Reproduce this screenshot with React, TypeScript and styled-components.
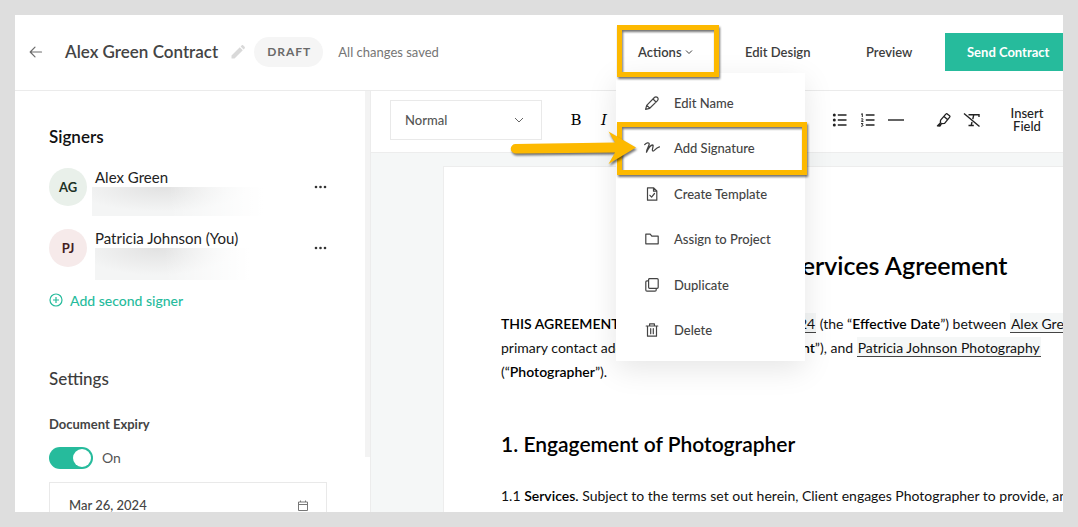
import React, { useState } from "react";
import styled, { createGlobalStyle, css } from "styled-components";

const GlobalStyle = createGlobalStyle`
  *, *::before, *::after { box-sizing: border-box; }
  body { margin: 0; background: #dedede; }
  body, button, input, select { font-family: Lato, "Open Sans", sans-serif; }
  button { border: 0; padding: 0; background: none; cursor: pointer; color: inherit; }
  h1, h2, p, ul { margin: 0; padding: 0; }
`;

const accent = "#26bb9c";
const marker = "#fdb900";

const Shell = styled.div`
  padding: 15px;
  height: 100vh;
`;

const Frame = styled.div`
  display: flex;
  flex-direction: column;
  height: 100%;
  overflow: hidden;
  background: #fff;
`;

const Header = styled.header`
  position: relative;
  z-index: 2;
  flex: none;
  display: flex;
  align-items: center;
  height: 76px;
  padding: 0 0 2px 13px;
  border-bottom: 1px solid #ebebeb;
  color: #3d3d3d;
`;

const BackButton = styled.button`
  display: flex;
  color: #6c6c6c;
  margin-right: 21px;
`;

const DocTitle = styled.span`
  font-size: 17px;
  font-weight: 600;
  white-space: nowrap;
  color: #444;
`;

const RenameButton = styled.button`
  display: flex;
  margin: 0 8px 0 12px;
`;

const Badge = styled.span`
  padding: 0 12px 0 13px;
  border-radius: 15px;
  background: #f5f5f5;
  color: #6a6a6a;
  font-size: 12px;
  font-weight: 700;
  line-height: 30px;
  letter-spacing: 1px;
`;

const SaveState = styled.span`
  margin-left: 15px;
  font-size: 13px;
  color: #757575;
  white-space: nowrap;
`;

const Nav = styled.nav`
  display: flex;
  align-items: center;
  margin-left: auto;
`;

const MenuAnchor = styled.div`
  position: relative;
  width: 102px;
  margin-right: 26px;
`;

const NavButton = styled.button<{ $width?: number }>`
  width: ${(p) => (p.$width ? `${p.$width}px` : "auto")};
  font-size: 13px;
  font-weight: 600;
  line-height: 38px;
  white-space: nowrap;
  text-align: left;
`;

const ActionsButton = styled(NavButton)`
  display: flex;
  align-items: center;
  gap: 3px;
  padding-left: 21px;
`;

const NavLinks = styled.div`
  display: flex;
  gap: 54px;
  margin-right: 32px;
`;

const SendButton = styled.button`
  height: 38px;
  width: 118px;
  padding-left: 22px;
  background: ${accent};
  color: #fff;
  font-size: 13px;
  font-weight: 700;
  text-align: left;
  white-space: nowrap;
`;

const outline = css`
  content: "";
  position: absolute;
  border: 5px solid ${marker};
  filter: drop-shadow(1px 2px 1px rgba(0, 0, 0, 0.55));
  pointer-events: none;
`;

const Callout = styled.span`
  ${outline}
  inset: -8px 0 -6px;
  z-index: 2;
`;

const Menu = styled.ul`
  position: absolute;
  top: 40px;
  left: -1px;
  display: flex;
  flex-direction: column;
  justify-content: space-between;
  width: 189px;
  height: 288px;
  padding: 8px 0;
  list-style: none;
  background: #fff;
  box-shadow: 0 8px 28px rgba(0, 0, 0, 0.1);
`;

const MenuEntry = styled.li<{ $marked?: boolean }>`
  position: relative;
  ${(p) =>
    p.$marked &&
    css`
      &::after {
        ${outline}
        inset: -4px -2px -4px 1px;
      }
    `}
`;

const MenuButton = styled.button`
  display: flex;
  align-items: center;
  gap: 14px;
  width: 100%;
  height: 45px;
  padding-left: 28px;
  color: #444;
  font-size: 13px;
  font-weight: 500;
  svg { flex: none; }
`;

const Pointer = styled.svg`
  position: absolute;
  z-index: 1;
  right: 169px;
  top: 5px;
  overflow: visible;
  filter: drop-shadow(1px 2px 1px rgba(0, 0, 0, 0.55));
`;

const Body = styled.div`
  flex: 1;
  min-height: 0;
  display: flex;
`;

const Sidebar = styled.aside`
  flex: none;
  display: flex;
  width: 356px;
  overflow: hidden;
  border-right: 1px solid #ececec;
`;

const SidebarContent = styled.div`
  flex: 1;
  padding: 34px 38px 0 34px;
`;

const ScrollThumb = styled.div`
  width: 5px;
  height: 87%;
  background: #f3f3f3;
`;

const SectionTitle = styled.h2<{ $soft?: boolean }>`
  font-size: 17px;
  line-height: 24px;
  font-weight: ${(p) => (p.$soft ? 500 : 600)};
  color: ${(p) => (p.$soft ? "#3d3d3d" : "#111")};
`;

const SignerList = styled.ul`
  margin-top: 19px;
  list-style: none;
`;

const Signer = styled.li`
  display: flex;
  gap: 8px;
  height: 61px;
`;

const Avatar = styled.span<{ $bg: string; $fg: string }>`
  flex: none;
  width: 38px;
  height: 38px;
  border-radius: 50%;
  background: ${(p) => p.$bg};
  color: ${(p) => p.$fg};
  font-size: 13px;
  font-weight: 700;
  line-height: 38px;
  text-align: center;
`;

const SignerInfo = styled.div`
  flex: 1;
  font-size: 15px;
  line-height: 19px;
  color: #222;
`;

const Redacted = styled.div<{ $wide?: boolean }>`
  height: ${(p) => (p.$wide ? 29 : 32)}px;
  width: ${(p) => (p.$wide ? 171 : 154)}px;
  margin-left: ${(p) => (p.$wide ? -3 : 0)}px;
  background:
    linear-gradient(to right, transparent 45%, #fff),
    radial-gradient(ellipse at 40% 0, #e2e2e2, #f4f5f5 60%);
`;

const MoreButton = styled.button`
  display: flex;
  align-items: center;
  height: 38px;
`;

const AddSigner = styled.button`
  display: flex;
  align-items: center;
  gap: 7px;
  height: 20px;
  color: ${accent};
  font-size: 14px;
  font-weight: 500;
`;

const Settings = styled.section`
  margin-top: 57px;
`;

const FieldTitle = styled.label`
  display: block;
  margin: 23px 0 13px;
  font-size: 13px;
  font-weight: 700;
  line-height: 20px;
  color: #444;
`;

const SwitchRow = styled.div`
  display: flex;
  align-items: center;
  gap: 9px;
  font-size: 14px;
  line-height: 22px;
  color: #555;
`;

const Switch = styled.input`
  appearance: none;
  width: 44px;
  height: 22px;
  margin: 0;
  padding: 2px;
  border-radius: 11px;
  background: #ccc;
  cursor: pointer;
  &::before {
    content: "";
    display: block;
    width: 18px;
    height: 18px;
    border-radius: 50%;
    background: #fff;
  }
  &:checked { background: ${accent}; }
  &:checked::before { margin-left: auto; }
`;

const DateField = styled.div`
  display: flex;
  align-items: center;
  height: 46px;
  margin-top: 13px;
  padding: 0 18px 0 19px;
  border: 1px solid #e9e9e9;
`;

const DateInput = styled.input`
  flex: 1;
  min-width: 0;
  padding: 0;
  border: 0;
  outline: 0;
  font-size: 13px;
  font-weight: 500;
  color: #444;
`;

const Editor = styled.main`
  flex: 1;
  min-width: 0;
  display: flex;
  flex-direction: column;
`;

const Toolbar = styled.div`
  flex: none;
  display: flex;
  align-items: center;
  gap: 20px;
  height: 62px;
  padding: 0 15px 4px 19px;
  border-bottom: 1px solid #ededed;
  color: #222;
`;

const SelectBox = styled.div`
  display: grid;
  align-items: center;
  width: 152px;
  height: 40px;
  border: 1px solid #e9e9e9;
  > * { grid-area: 1 / 1; }
  > svg { justify-self: end; margin-right: 17px; pointer-events: none; }
`;

const StyleSelect = styled.select`
  appearance: none;
  width: 100%;
  height: 100%;
  padding: 0 14px;
  border: 0;
  outline: 0;
  background: transparent;
  font-size: 13px;
  font-weight: 500;
  color: #555;
`;

const ToolGroup = styled.div`
  display: flex;
`;

const ToolButton = styled.button`
  display: flex;
  align-items: center;
  justify-content: center;
  width: 28px;
  height: 32px;
`;

const Glyph = styled.span<{ $italic?: boolean }>`
  font-family: "DejaVu Serif", serif;
  font-size: 15px;
  font-weight: 400;
  font-style: ${(p) => (p.$italic ? "italic" : "normal")};
  color: #000;
`;

const InsertField = styled.button`
  width: 42px;
  font-size: 13px;
  font-weight: 500;
  line-height: 13px;
  text-align: center;
`;

const Canvas = styled.div`
  flex: 1;
  min-height: 0;
  overflow: hidden;
  padding: 13px 0 0 72px;
  background: #f5f7f7;
`;

const Paper = styled.article`
  width: 762px;
  min-height: 100%;
  padding: 82px 57px;
  border: 1px solid #ededed;
  background: #fff;
  color: #111;
`;

const PaperTitle = styled.h1`
  font-size: 25px;
  font-weight: 600;
  line-height: 32px;
  text-align: center;
  color: #000;
`;

const Clause = styled.h2`
  margin-top: 46px;
  font-size: 21px;
  font-weight: 600;
  line-height: 28px;
  color: #000;
`;

const Paragraph = styled.p<{ $gap: number }>`
  margin-top: ${(p) => p.$gap}px;
  font-size: 14px;
  line-height: 24px;
  white-space: nowrap;
  b { font-weight: 600; color: #000; }
`;

const Token = styled.span`
  padding: 2px 1px 0;
  border-bottom: 1px solid #444;
  background: #f5f7f7;
`;

type IconProps = { size?: number; children: React.ReactNode; width?: number };
const Icon = ({ size = 16, width = 1.2, children }: IconProps) => (
  <svg width={size} height={size} viewBox="0 0 16 16" fill="none" stroke="currentColor" strokeWidth={width} strokeLinecap="round" strokeLinejoin="round" aria-hidden="true">
    {children}
  </svg>
);

const menuItems = [
  { label: "Edit Name", icon: <Icon><path d="M1.600 14.400 2.700 10.300 10.400 2.500a2.100 2.100 0 0 1 3.100 3.100L5.700 13.300ZM2.900 10.300l2.800 2.800M9 4l3 3" /></Icon> },
  { label: "Add Signature", marked: true, icon: <Icon width={1.3}><path d="M.7 4.600C2.200 2.800 5 2 5.200 4c.1 2-2.300 4.400-2.700 8.200C4.200 8.600 6.600 5.200 8.500 5c1.900-.1-1.300 5.400.3 6 1.700.5 2.200-2.900 6.600-4.200" /></Icon> },
  { label: "Create Template", icon: <Icon><path d="M3.500 1.800h6.200l3.100 3.100v9.300H3.500ZM9.500 2v3.200h3.200M5.900 9.300l1.700 1.800 2.900-3.600" /></Icon> },
  { label: "Assign to Project", icon: <Icon><path d="M1.800 3.200h4.400l1.600 2h6.400v7.600H1.800Z" /></Icon> },
  { label: "Duplicate", icon: <Icon><path d="M5 1.700h8.200a1 1 0 0 1 1 1v7.600a1 1 0 0 1-1 1H5.600a1 1 0 0 1-1-1V2.700a1 1 0 0 1 1-1ZM4.500 3.800H3a1.200 1.200 0 0 0-1.200 1.200v8a1.200 1.200 0 0 0 1.200 1.200h8a1.200 1.200 0 0 0 1.200-1.200v-1.600" /></Icon> },
  { label: "Delete", icon: <Icon><path d="M2.200 4h11.600M5.600 3.800V1.900h4.800v1.900M3.500 4.200v10h9v-10M6.700 6.700v5M9.300 6.700v5" /></Icon> },
];

const signers = [
  { initials: "AG", name: "Alex Green", bg: "#e9f0ea", fg: "#1d3225", wide: true },
  { initials: "PJ", name: "Patricia Johnson (You)", bg: "#f6eaea", fg: "#43201f", wide: false },
];

const alignWidths = [[2, 14], [4, 12], [6, 14], [2, 10]];

export default function App() {
  const [expiry, setExpiry] = useState(true);
  const [date, setDate] = useState("Mar 26, 2024");

  return (
    <Shell>
      <GlobalStyle />
      <Frame>
        <Header>
          <BackButton aria-label="Back">
            <Icon><path d="M13.500 8H2.500M7 3.200 2.200 8 7 12.800" /></Icon>
          </BackButton>
          <DocTitle>Alex Green Contract</DocTitle>
          <RenameButton aria-label="Rename">
            <svg width="16" height="16" viewBox="0 0 16 16" fill="#d9d9d9" aria-hidden="true">
              <path d="M1.500 14.500v-3L9.800 3.200l3 3-8.300 8.300ZM10.600 2.400l1-1c.6-.5 1.200-.5 1.700 0l1.300 1.300c.5.5.5 1.100 0 1.700l-1 1Z" />
            </svg>
          </RenameButton>
          <Badge>DRAFT</Badge>
          <SaveState>All changes saved</SaveState>
          <Nav>
            <MenuAnchor>
              <ActionsButton aria-haspopup="menu" aria-expanded="true">
                Actions
                <svg width="8" height="8" viewBox="0 0 8 8" fill="none" stroke="currentColor" aria-hidden="true"><path d="m1 2.500 3 3 3-3" /></svg>
              </ActionsButton>
              <Menu>
                {menuItems.map((item) => (
                  <MenuEntry key={item.label} $marked={item.marked}>
                    <MenuButton>
                      {item.icon}
                      {item.label}
                    </MenuButton>
                    {item.marked && (
                      <Pointer width="126" height="34" viewBox="0 0 126 34" aria-hidden="true">
                        <path fill={marker} d="M5.500 13 105 11.500 98.500 0.500 126 16.500 98.500 33 105 21.500 5.500 22.500A4.700 4.700 0 0 1 5.500 13Z" />
                      </Pointer>
                    )}
                  </MenuEntry>
                ))}
              </Menu>
              <Callout />
            </MenuAnchor>
            <NavLinks>
              <NavButton $width={67}>Edit Design</NavButton>
              <NavButton $width={47}>Preview</NavButton>
            </NavLinks>
            <SendButton>Send Contract</SendButton>
          </Nav>
        </Header>
        <Body>
          <Sidebar>
            <SidebarContent>
              <SectionTitle>Signers</SectionTitle>
              <SignerList>
                {signers.map((s) => (
                  <Signer key={s.initials}>
                    <Avatar $bg={s.bg} $fg={s.fg}>{s.initials}</Avatar>
                    <SignerInfo>
                      {s.name}
                      <Redacted $wide={s.wide} />
                    </SignerInfo>
                    <MoreButton aria-label={`Options for ${s.name}`}>
                      <svg width="13" height="4" viewBox="0 0 13 4" fill="#333" aria-hidden="true">
                        <circle cx="2" cy="2" r="1.300" /><circle cx="6.500" cy="2" r="1.300" /><circle cx="11" cy="2" r="1.300" />
                      </svg>
                    </MoreButton>
                  </Signer>
                ))}
              </SignerList>
              <AddSigner>
                <svg width="14" height="14" viewBox="0 0 14 14" fill="none" stroke="currentColor" strokeWidth="1.200" aria-hidden="true">
                  <circle cx="7" cy="7" r="6" /><path d="M7 4v6M4 7h6" />
                </svg>
                Add second signer
              </AddSigner>
              <Settings>
                <SectionTitle $soft>Settings</SectionTitle>
                <FieldTitle htmlFor="expiry">Document Expiry</FieldTitle>
                <SwitchRow>
                  <Switch id="expiry" type="checkbox" role="switch" checked={expiry} onChange={(e) => setExpiry(e.target.checked)} />
                  {expiry ? "On" : "Off"}
                </SwitchRow>
                <DateField>
                  <DateInput aria-label="Expiry date" value={date} onChange={(e) => setDate(e.target.value)} />
                  <svg width="10" height="11" viewBox="0 0 10 11" fill="none" stroke="#777" aria-hidden="true">
                    <path d="M.5 2h9v8.500h-9ZM.5 4.500h9M2.500.5V2M7.500.5V2" />
                  </svg>
                </DateField>
              </Settings>
            </SidebarContent>
            <ScrollThumb />
          </Sidebar>
          <Editor>
            <Toolbar>
              <SelectBox>
                <StyleSelect aria-label="Text style" defaultValue="Normal">
                  <option>Normal</option>
                  <option>Heading</option>
                </StyleSelect>
                <svg width="10" height="8" viewBox="0 0 10 8" fill="none" stroke="#666" aria-hidden="true"><path d="m1 2 4 4 4-4" /></svg>
              </SelectBox>
              <ToolGroup>
                <ToolButton aria-label="Bold"><Glyph>B</Glyph></ToolButton>
                <ToolButton aria-label="Italic"><Glyph $italic>I</Glyph></ToolButton>
                <ToolButton aria-label="Underline"><Icon><path d="M4 2v6a4 4 0 0 0 8 0V2M3 14.500h10" /></Icon></ToolButton>
                <ToolButton aria-label="Link"><Icon><path d="M7 9 10 6M6 6 3 9a2.500 2.500 0 0 0 4 4l2-2M10 10l3-3a2.500 2.500 0 0 0-4-4L7 5" /></Icon></ToolButton>
              </ToolGroup>
              <ToolGroup>
                {alignWidths.map(([from, to]) => (
                  <ToolButton key={`${from}-${to}`} aria-label="Align"><Icon><path d={`M2 3h12M${from} 8H${to}M2 13h12`} /></Icon></ToolButton>
                ))}
              </ToolGroup>
              <ToolGroup>
                <ToolButton aria-label="Bulleted list">
                  <Icon width={1.4}><path d="M5.800 3h8.700M5.800 8h8.700M5.800 13h8.700" strokeLinecap="butt" /><g fill="currentColor" stroke="none"><circle cx="2.300" cy="3" r="1.500" /><circle cx="2.300" cy="8" r="1.500" /><circle cx="2.300" cy="13" r="1.500" /></g></Icon>
                </ToolButton>
                <ToolButton aria-label="Numbered list">
                  <Icon width={1.4}><path d="M5.800 3h8.700M5.800 8h8.700M5.800 13h8.700" strokeLinecap="butt" /><path strokeWidth="1" d="M1.400 2.200 2.300 1.600v3M1.400 6.900c1-.8 2-.1 1.300.8L1.500 9.400h1.600M1.400 11.600h1.500l-.8 1.200c1.300 0 1.200 1.800-.7 1.500" /></Icon>
                </ToolButton>
                <ToolButton aria-label="Divider">
                  <svg width="18" height="16" viewBox="0 0 18 16" stroke="currentColor" strokeWidth="1.400" aria-hidden="true"><path d="M1 8h16" /></svg>
                </ToolButton>
              </ToolGroup>
              <ToolGroup>
                <ToolButton aria-label="Highlight">
                  <Icon width={1.3}><path d="m4.600 8.200 5.200-6.100c.4-.5.9-.5 1.400-.2l2.400 1.900c.5.400.5.900.1 1.400L8.600 11.300l-3 .4-1.300-1.100ZM8 4.400l3.500 3" /><path fill="currentColor" d="m3.600 11.600-2.200 2.300 2.500.1 1.200-1.600Z" /></Icon>
                </ToolButton>
                <ToolButton aria-label="Clear formatting">
                  <svg width="18" height="16" viewBox="0 0 18 16" fill="none" stroke="currentColor" strokeWidth="1.400" aria-hidden="true">
                    <path d="M1 1.500 16.500 14.500M5.500 2.700H16V5M10.800 2.700 9.800 7.200M9 10l-.8 3.500M5.500 13.500h5.300" />
                  </svg>
                </ToolButton>
              </ToolGroup>
              <InsertField>Insert Field</InsertField>
            </Toolbar>
            <Canvas>
              <Paper>
                <PaperTitle>Photography Services Agreement</PaperTitle>
                <Paragraph $gap={31}>
                  <b>THIS AGREEMENT</b> is made effective <Token>Mar 26, 2024</Token> (the “<b>Effective Date</b>”) between <Token>Alex Green</Token>,
                  <br />
                  primary contact address on file with me (the “<b>Client</b>”), and <Token>Patricia Johnson Photography</Token>
                  <br />
                  (“<b>Photographer</b>”).
                </Paragraph>
                <Clause>1. Engagement of Photographer</Clause>
                <Paragraph $gap={26}>
                  1.1 <b>Services.</b> Subject to the terms set out herein, Client engages Photographer to provide, and
                </Paragraph>
              </Paper>
            </Canvas>
          </Editor>
        </Body>
      </Frame>
    </Shell>
  );
}
